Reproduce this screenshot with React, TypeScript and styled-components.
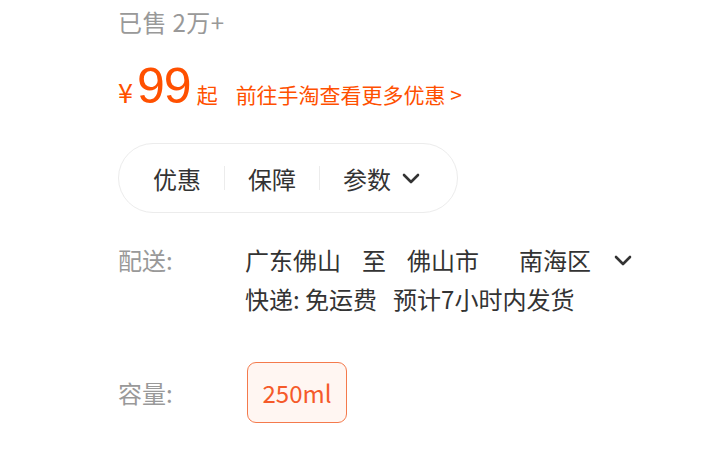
import React from "react";
import styled, { createGlobalStyle } from "styled-components";

const Global = createGlobalStyle`
  html, body { margin: 0; padding: 0; background: #fff; }
  body { font-family: "Noto Sans CJK SC", "Noto Sans", sans-serif; }
`;

const Page = styled.div`
  padding: 4px 0 0 118px;
  display: flex;
  flex-direction: column;
  align-items: flex-start;
`;

const Sold = styled.div`
  font-size: 24px;
  line-height: 36px;
  color: #999;
  letter-spacing: 0.4px;
`;

const PriceRow = styled.div`
  display: flex;
  align-items: baseline;
  margin-top: 18px;
  height: 56px;
  color: #ff5000;
`;

const Yen = styled.span`
  font-size: 27px;
  line-height: 56px;
  margin-right: 4px;
`;

const Amount = styled.span`
  font-family: "Liberation Sans", "Noto Sans", sans-serif;
  font-size: 50px;
  line-height: 56px;
  letter-spacing: -1px;
`;

const Qi = styled.span`
  font-size: 21px;
  margin-left: 6px;
`;

const Promo = styled.span`
  font-size: 21px;
  margin-left: 18px;
`;

const Pill = styled.div`
  margin-top: 29px;
  box-sizing: border-box;
  width: 340px;
  height: 70px;
  border: 1px solid #ececec;
  border-radius: 35px;
  padding: 0 0 0 34px;
  display: flex;
  align-items: center;
  gap: 23px;
  white-space: nowrap;
`;

const PillItem = styled.span`
  flex-shrink: 0;
  font-size: 24px;
  color: #333;
  display: flex;
  align-items: center;
  gap: 11px;
  white-space: nowrap;
`;

const Sep = styled.span`
  flex-shrink: 0;
  width: 1px;
  height: 24px;
  background: #ececec;
`;

const Row = styled.div`
  margin-top: 31px;
  display: flex;
  align-items: flex-start;
`;

const Label = styled.span`
  width: 127px;
  flex-shrink: 0;
  font-size: 24px;
  line-height: 32px;
  color: #999;
`;

const Lines = styled.div`
  display: flex;
  flex-direction: column;
  gap: 7px;
`;

const Line = styled.div`
  display: flex;
  align-items: center;
  font-size: 24px;
  line-height: 32px;
  color: #333;
  white-space: pre;
`;

const Seg = styled.span<{ $gap: number }>`
  margin-left: ${(p) => p.$gap}px;
  display: flex;
  align-items: center;
`;

const CapRow = styled.div`
  margin-top: 47px;
  display: flex;
  align-items: center;
`;

const Option = styled.div`
  margin-left: 2px;
  box-sizing: border-box;
  width: 100px;
  height: 61px;
  border: 1.5px solid #f47a4c;
  border-radius: 9px;
  background: #fff6f2;
  display: flex;
  align-items: center;
  justify-content: center;
  font-size: 24px;
  color: #f55a2a;
`;

const Chevron = () => (
  <svg width={18} height={12} viewBox="0 0 18 12" fill="none" stroke="#333" strokeWidth={2.6} strokeLinecap="round" strokeLinejoin="round">
    <path d="M2 3l7 7 7-7" />
  </svg>
);

export default function App() {
  return (
    <>
      <Global />
      <Page>
        <Sold>已售 2万+</Sold>
        <PriceRow>
          <Yen>¥</Yen>
          <Amount>99</Amount>
          <Qi>起</Qi>
          <Promo>前往手淘查看更多优惠 &gt;</Promo>
        </PriceRow>
        <Pill>
          <PillItem>优惠</PillItem>
          <Sep />
          <PillItem>保障</PillItem>
          <Sep />
          <PillItem>
            参数
            <Chevron />
          </PillItem>
        </Pill>
        <Row>
          <Label>配送:</Label>
          <Lines>
            <Line>
              <span>广东佛山</span>
              <Seg $gap={21}>至</Seg>
              <Seg $gap={21}>佛山市</Seg>
              <Seg $gap={40}>南海区</Seg>
              <Seg $gap={23}>
                <Chevron />
              </Seg>
            </Line>
            <Line>
              <span>快递: 免运费</span>
              <Seg $gap={16}>预计7小时内发货</Seg>
            </Line>
          </Lines>
        </Row>
        <CapRow>
          <Label>容量:</Label>
          <Option>250ml</Option>
        </CapRow>
      </Page>
    </>
  );
}
